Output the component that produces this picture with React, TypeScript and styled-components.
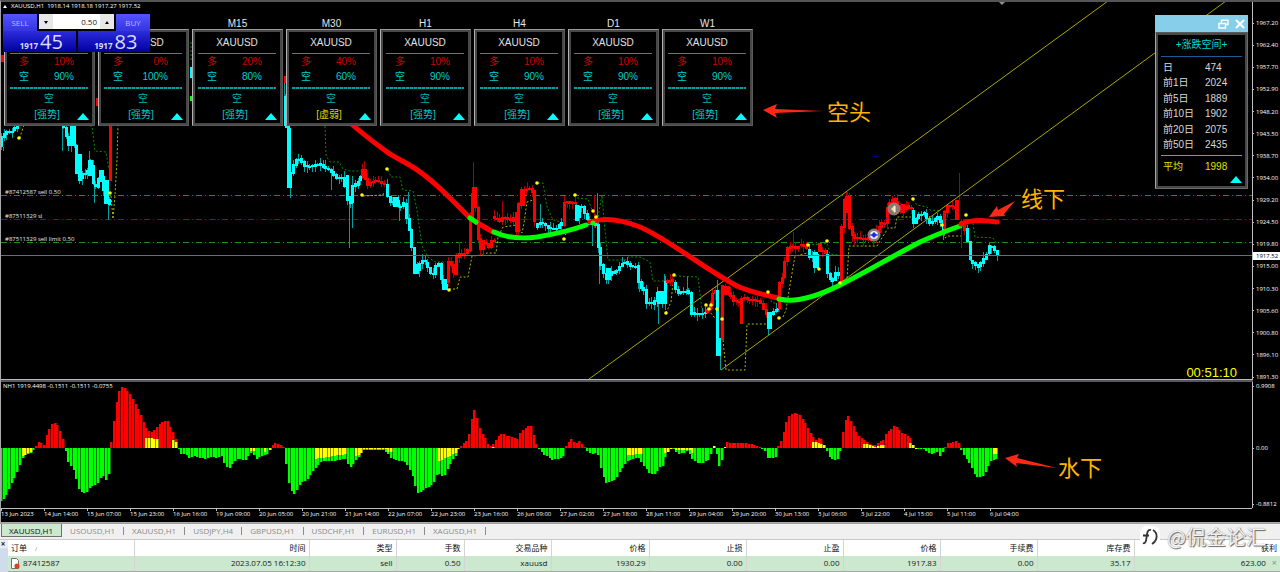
import React from 'react';
import styled, { createGlobalStyle } from 'styled-components';

const UI = '"Open Sans", "Noto Sans CJK SC", sans-serif';
const ARIAL = '"Liberation Sans", "Noto Sans CJK SC", sans-serif';
const CYAN = '#00ffff';
const RED = '#ff0000';
const LIME = '#00ff00';

const Global = createGlobalStyle`
  * { box-sizing: border-box; }
  body { margin: 0; background: #000; font-family: ${UI}; }
  button, input, select { font-family: inherit; padding: 0; margin: 0; border: 0; }
`;

/* ---------- price data ---------- */

type Run = { up: boolean; pts: number[] };

const RUNS: Run[] = [
  { up: false, pts: [0, 147, 3, 135, 8, 132, 14, 131, 18, 124] },
  { up: false, pts: [62, 118, 66, 132, 70, 146, 73, 120, 76, 152, 79, 181, 84, 173, 88, 175, 91, 162, 94, 184, 98, 188, 101, 170, 105, 190, 109, 204] },
  { up: false, pts: [284, 97, 287, 128, 289, 188, 292, 174, 296, 161, 301, 159, 306, 167, 312, 166, 320, 164, 326, 167, 332, 171, 338, 178, 345, 178, 347, 198, 351, 203, 354, 186, 358, 184, 361, 177] },
  { up: true, pts: [361, 170, 366, 178, 369, 185, 373, 181, 379, 181, 385, 184] },
  { up: false, pts: [386, 184, 388, 196, 393, 204, 397, 200, 400, 208, 405, 203, 407, 210, 408, 226, 412, 233, 414, 265, 418, 272, 422, 260, 427, 262, 431, 273, 434, 275, 438, 264, 441, 264, 442, 278, 447, 289] },
  { up: true, pts: [447, 282, 449, 262, 453, 265, 456, 275, 458, 254, 468, 253, 470, 240, 472, 203, 475, 188, 477, 212, 479, 238, 482, 249, 486, 241, 490, 247, 493, 240] },
  { up: true, pts: [493, 217, 501, 221, 505, 217, 512, 221, 515, 217, 517, 232, 519, 215, 521, 190, 533, 189, 536, 222] },
  { up: false, pts: [536, 228, 540, 222, 545, 224, 551, 229, 558, 228, 562, 222] },
  { up: true, pts: [563, 226, 565, 202, 574, 203] },
  { up: false, pts: [575, 206, 577, 220, 580, 207, 584, 206, 587, 218, 592, 226, 596, 222, 598, 232, 600, 257, 603, 270, 608, 280, 612, 271, 617, 273, 621, 266, 626, 262, 632, 266, 638, 266, 640, 286, 645, 290, 647, 303, 655, 304, 658, 292, 664, 303, 666, 282] },
  { up: true, pts: [666, 282, 674, 280] },
  { up: false, pts: [674, 283, 678, 293, 690, 291, 692, 315, 697, 313, 700, 315, 705, 312] },
  { up: true, pts: [706, 312, 711, 307, 715, 290] },
  { up: true, pts: [724, 288, 731, 293, 735, 302, 741, 301] },
  { up: true, pts: [743, 298, 750, 300, 760, 300, 765, 310, 767, 314] },
  { up: false, pts: [772, 314, 778, 308] },
  { up: true, pts: [778, 308, 780, 284, 785, 275, 787, 250, 790, 246, 797, 248, 802, 244, 807, 249] },
  { up: false, pts: [808, 250, 811, 258, 813, 253, 816, 268, 818, 254] },
  { up: true, pts: [821, 250, 826, 253] },
  { up: false, pts: [826, 255, 828, 272, 832, 281, 835, 280, 836, 272, 839, 275] },
  { up: true, pts: [840, 282, 842, 235, 845, 200, 849, 196, 851, 232, 855, 238, 874, 239, 879, 230, 882, 224, 886, 223, 888, 208, 893, 200, 897, 202, 902, 212, 906, 206, 911, 208] },
  { up: false, pts: [912, 212, 915, 224, 919, 215, 927, 213, 929, 223, 935, 222, 938, 216, 941, 219, 943, 229] },
  { up: true, pts: [943, 228, 946, 210, 950, 204, 955, 208] },
  { up: true, pts: [960, 222, 965, 230] },
  { up: false, pts: [966, 228, 968, 236, 971, 260, 975, 264, 980, 267, 983, 261, 987, 256, 990, 246, 993, 247, 998, 255] },
];

/* tall single bodies: x, y, width, height, colour */
const BLOCKS: [number, number, number, number, string][] = [
  [0, 55, 5, 7, RED], [96, 98, 3, 8, RED], [190, 67, 3, 11, CYAN], [190, 96, 3, 5, LIME],
  [284, 76, 3, 7, RED], [285, 97, 3, 31, CYAN], [287, 128, 4, 60, CYAN],
  [109, 125, 3, 56, RED], [78, 154, 4, 27, CYAN], [88, 160, 5, 16, CYAN], [99, 170, 5, 12, CYAN], [104, 180, 5, 24, CYAN],
  [362, 169, 5, 9, RED], [346, 175, 3, 24, CYAN], [349, 196, 4, 8, CYAN], [393, 197, 6, 10, CYAN],
  [413, 264, 6, 10, CYAN], [442, 279, 5, 11, CYAN], [454, 265, 4, 10, RED], [472, 187, 5, 16, RED],
  [480, 240, 5, 10, RED], [515, 212, 5, 20, RED], [520, 189, 5, 17, RED], [533, 190, 3, 32, RED],
  [575, 205, 4, 16, CYAN], [606, 268, 5, 12, CYAN], [657, 291, 8, 13, CYAN],
  [716, 290, 3, 48, CYAN], [716, 338, 5, 18, CYAN], [721, 285, 3, 55, RED], [724, 286, 6, 9, RED],
  [740, 298, 3, 26, RED], [767, 312, 5, 17, CYAN], [813, 252, 5, 16, CYAN], [818, 243, 4, 9, RED],
  [840, 235, 3, 47, RED], [845, 196, 5, 17, RED], [893, 198, 5, 6, RED], [901, 204, 4, 9, RED],
  [955, 200, 4, 20, RED], [912, 210, 3, 14, CYAN],
];

/* long shadows: x, top, bottom, up */
const WICKS: [number, number, number, boolean][] = [
  [3, 147, 151, false], [62, 125, 151, false], [89, 151, 162, false], [94, 184, 203, false], [108, 204, 220, false],
  [284, 83, 97, false], [290, 188, 198, false], [331, 170, 190, false], [349, 200, 248, false], [352, 176, 228, false],
  [364, 161, 170, true], [399, 205, 221, false], [408, 192, 228, false], [473, 162, 187, true], [502, 201, 216, true],
  [459, 242, 256, true], [527, 182, 192, true], [540, 204, 222, false], [592, 226, 246, false], [594, 195, 228, true],
  [597, 193, 227, false], [599, 257, 284, false], [639, 280, 292, false], [658, 300, 324, false], [664, 274, 290, false],
  [687, 276, 292, false], [717, 280, 290, false], [720, 356, 370, false], [793, 232, 246, true], [768, 329, 335, false],
  [959, 173, 200, true], [961, 226, 248, true], [943, 229, 240, false], [847, 192, 198, true], [897, 194, 200, true],
];

const noise = (n: number) => {
  const v = Math.sin(n * 12.9898) * 43758.5453;
  return v - Math.floor(v);
};

const sample = (pts: number[], x: number) => {
  for (let i = 0; i + 3 < pts.length; i += 2) {
    if (x <= pts[i + 2]) {
      const t = (x - pts[i]) / (pts[i + 2] - pts[i] || 1);
      return pts[i + 1] + t * (pts[i + 3] - pts[i + 1]);
    }
  }
  return pts[pts.length - 1];
};

const STEP = 2.69;

const Candles = () => (
  <g shapeRendering="crispEdges">
    {WICKS.map(([x, a, b, up], i) => (
      <rect key={i} x={x} y={a} width={1} height={b - a} fill={up ? '#a80000' : '#00a0a0'} />
    ))}
    {RUNS.map((run, r) => {
      const end = run.pts[run.pts.length - 2];
      const bars: React.ReactNode[] = [];
      for (let x = run.pts[0]; x < end; x += STEP) {
        const a = sample(run.pts, x);
        const b = sample(run.pts, Math.min(end, x + STEP));
        const top = Math.round(Math.min(a, b) - noise(x) * 1.5);
        const bottom = Math.max(top + 2, Math.round(Math.max(a, b) + noise(x + 7) * 1.5));
        const w0 = Math.round(top - noise(x + 3) * 6);
        const w1 = Math.round(bottom + noise(x + 5) * 6);
        bars.push(
          <g key={x}>
            <rect x={Math.round(x) + 1} y={w0} width={1} height={w1 - w0} fill={run.up ? '#b00000' : '#00a0a0'} />
            <rect x={Math.round(x)} y={top} width={3} height={bottom - top} fill={run.up ? RED : CYAN} />
          </g>,
        );
      }
      return <g key={r}>{bars}</g>;
    })}
    {BLOCKS.map(([x, y, w, h, c], i) => <rect key={i} x={x} y={y} width={w} height={h} fill={c} />)}
  </g>
);

const GREEN_STOPS = [
  '82,125 92,126 95,151 106,152 109,170', '325,126 326,156 330,162 339,162 343,169 350,171 361,171',
  '388,170 391,177 400,177 403,190 413,191 417,210 422,246 428,257 435,262 445,262',
  '538,183 543,183 547,207 553,220 562,222', '577,198 588,199 592,210 598,217 602,195 604,220 608,260 625,260 628,257 640,257 650,262 653,281 665,281',
  '675,276 698,277 702,310 706,312', '768,293 772,303 777,303', '808,245 823,244 827,243 830,254 838,255',
  '913,200 917,205 927,207 930,210 940,211', '973,223 975,237 993,238 997,244', '191,42 191,62',
];
const YELLOW_STOPS = [
  '24,125 20,137', '38,125 47,125', '111,196 113,219 115,195 117,160 118,125', '363,196 383,195 384,191',
  '449,289 457,289 460,277 468,277 472,256 483,255 487,253 496,253 498,237 503,227 517,225 522,233 524,223 527,202 533,200',
  '565,235 569,230', '666,313 671,302 673,283', '708,310 715,318', '723,340 726,370 745,370 747,324 766,324',
  '783,317 786,310 790,285 795,256 807,253', '841,283 847,279 849,246 877,246 885,233 888,228 895,228 897,217 911,217',
  '943,230 945,238 948,236 963,236',
];
const DOTS = [
  [19, 138], [110, 193], [387, 169], [362, 195], [449, 290], [537, 183], [575, 195], [593, 211], [596, 217], [564, 239],
  [674, 275], [666, 313], [706, 305], [709, 309], [711, 305], [717, 309], [722, 319], [768, 292], [779, 318], [808, 245],
  [827, 241], [819, 269], [840, 283], [913, 199], [942, 225], [966, 215],
];

/* ---------- histogram data ---------- */

const HIST = [
  0, -54, 5, -50, 10, -39, 15, -29, 20, -17, 23, -9, 26, -6, 32, -5, 34, 0, 36, 2, 39, 7, 43, 3, 45, 3, 47, 14, 50, 20, 53, 25, 57, 24, 60, 17, 63, 9,
  64, 0, 66, -4, 69, -17, 73, -20, 76, -30, 79, -41, 83, -45, 87, -44, 91, -38, 97, -37, 101, -29, 104, -28, 106, -32, 109, -25, 110, 0,
  112, 10, 114, 27, 116, 43, 119, 57, 122, 61, 125, 60, 130, 54, 135, 45, 140, 36, 143, 27, 147, 18, 151, 15, 156, 20, 160, 24, 163, 27, 168, 27,
  171, 20, 175, 12, 178, 1, 180, -6, 186, -6, 189, -10, 195, -8, 205, -11, 212, -9, 217, -10, 221, -7, 225, -17, 229, -21, 234, -14, 238, -11,
  246, -12, 250, -5, 253, -6, 256, -11, 262, -8, 267, -7, 270, -2, 272, 3, 276, 5, 280, 4, 284, 1, 285, -7, 288, -32, 291, -42, 294, -46, 298, -40,
  301, -35, 306, -33, 314, -22, 322, -13, 330, -13, 340, -12, 345, -10, 350, -20, 354, -15, 358, -10, 362, -4, 364, -2, 384, -2, 388, -6, 392, -11,
  400, -13, 405, -14, 409, -20, 413, -29, 417, -45, 420, -44, 424, -41, 430, -38, 434, -34, 437, -26, 440, -26, 444, -29, 448, -20, 452, -12,
  456, -8, 458, -1, 460, 1, 464, 5, 468, 8, 471, 24, 473, 37, 475, 38, 478, 27, 481, 16, 485, 10, 489, 2, 492, 2, 495, 6, 499, 13, 503, 15, 506, 12,
  513, 11, 517, 8, 521, 17, 525, 20, 528, 22, 532, 22, 534, 11, 537, 2, 539, -1, 543, -6, 548, -9, 552, -12, 557, -11, 563, -10, 564, -1, 567, 4,
  572, 10, 575, 4, 580, 7, 584, 2, 586, -2, 592, -7, 594, -4, 598, -6, 602, -25, 606, -35, 609, -34, 615, -32, 621, -22, 624, -17, 628, -13,
  633, -11, 638, -9, 642, -15, 647, -22, 650, -26, 656, -26, 659, -19, 663, -18, 666, -7, 670, -2, 672, 0, 675, -3, 678, -6, 684, -5, 688, -2,
  691, -10, 696, -14, 702, -16, 706, -13, 710, -12, 712, -2, 714, 2, 716, -3, 718, -15, 720, -20, 723, -7, 725, 2, 727, 6, 732, 5, 745, 5, 752, 4,
  760, 1, 762, -1, 765, -3, 768, -11, 772, -10, 777, -8, 778, 1, 782, 9, 786, 25, 790, 34, 794, 35, 799, 34, 803, 29, 807, 22, 811, 14, 816, 8,
  820, 11, 823, 6, 826, -1, 830, -10, 834, -12, 839, -11, 841, 2, 843, 16, 846, 30, 848, 33, 852, 25, 856, 17, 860, 11, 865, 8, 870, 4, 875, 3,
  880, 7, 884, 8, 886, 14, 890, 18, 894, 22, 897, 21, 901, 16, 905, 14, 908, 12, 911, 9, 913, 3, 915, -1, 924, -1, 927, -4, 932, -6, 937, -4,
  940, -8, 943, -3, 945, 0, 947, 5, 955, 6, 957, 8, 960, 3, 962, -4, 967, -11, 971, -17, 974, -25, 978, -30, 982, -29, 985, -25, 988, -18,
  991, -13, 995, -11, 998, -11,
];
/* from, to, size at start, size at end */
const SIGNAL = [
  [19, 32, 9, 3], [144, 158, 10, 9], [171, 177, 9, 4], [250, 255, 3, 3], [262, 265, 4, 4], [268, 270, 3, 3], [313, 346, 11, 6], [354, 361, 9, 5],
  [361, 386, 1, 1], [386, 391, 4, 4], [437, 458, 14, 3], [490, 493, 1, 1], [625, 641, 7, 6], [663, 670, 6, 2], [673, 689, 2, 2], [689, 692, 5, 5],
  [711, 714, 3, 3], [722, 724, 4, 4], [810, 825, 7, 3], [861, 875, 5, 1], [875, 885, 2, 4], [907, 915, 6, 1], [992, 999, 6, 6],
];
const ZERO = 448;

const Histogram = () => {
  const bars: React.ReactNode[] = [];
  for (let i = 0; i < 371; i++) {
    const x = i * STEP;
    const v = Math.round(sample(HIST, x + 1));
    const px = Math.round(x);
    const bar = (h: number, bright: string, dark: string, k: string) => {
      const size = Math.max(1, Math.abs(h));
      const y = h >= 0 ? ZERO - size : ZERO;
      return (
        <g key={k + i}>
          <rect x={px} y={y} width={3} height={size} fill={dark} />
          <rect x={px} y={y} width={2} height={size} fill={bright} />
        </g>
      );
    };
    bars.push(v >= 0 ? bar(v, RED, '#780000', 'v') : bar(v, LIME, '#007800', 'v'));
    const s = SIGNAL.find(([a, b]) => x >= a && x < b);
    if (s) {
      const h = Math.min(Math.abs(v) || 1, Math.round(s[2] + ((s[3] - s[2]) * (x - s[0])) / (s[1] - s[0])));
      bars.push(bar(v >= 0 ? h : -h, '#ffff00', '#8c8c00', 's'));
    }
  }
  return <g shapeRendering="crispEdges">{bars}</g>;
};

/* ---------- chart window ---------- */

const ChartWindow = styled.section`
  display: flex;
  border-top: 2px solid #555;
  border-left: 1px solid #a8a8a8;
  border-bottom: 1px solid #a8a8a8;
  background: #000;
  color: #fff;
`;
const Panes = styled.div`flex: 1; min-width: 0; display: flex; flex-direction: column;`;
const Pane = styled.div<{ $h: number }>`
  position: relative;
  height: ${(p) => p.$h}px;
  border-right: 1px solid #c0c0c0;
  overflow: hidden;
`;
const Drawing = styled.svg`display: block; width: 100%; height: 100%;`;
const Splitter = styled.div`height: 3px; background: #57575c; border-top: 1px solid #b8b8b8;`;
const Caption = styled.div`
  position: absolute;
  top: 0;
  left: 2px;
  display: flex;
  align-items: center;
  gap: 4px;
  font-size: 6px;
  line-height: 9px;
  white-space: pre;
  svg { fill: #fff; }
`;
const TimeAxis = styled.div`
  display: flex;
  height: 14px;
  border-top: 1px solid #c0c0c0;
  font-size: 6px;
  line-height: 11px;
  overflow: hidden;
  margin-right: 1px;
`;
const Tick = styled.span`flex: 0 0 43px; white-space: nowrap; position: relative;
  &::before { content: ''; position: absolute; top: 0; left: 0; width: 1px; height: 2px; background: #c0c0c0; }
`;
const Axis = styled.div`
  position: relative;
  flex: 0 0 27px;
  font-size: 6px;
  line-height: 8px;
  overflow: hidden;
`;
const Scale = styled.ul<{ $h: number; $top: number }>`
  list-style: none;
  margin: ${(p) => p.$top}px 0 0;
  padding: 0;
  height: ${(p) => p.$h}px;
  display: flex;
  flex-direction: column;
  justify-content: space-between;
  li { display: flex; align-items: center; gap: 2px; white-space: nowrap; }
  li::before { content: ''; width: 1px; height: 1px; background: #c0c0c0; }
`;
const SubScale = styled(Scale)`
  li:nth-child(2) { padding-top: 6px; }
`;
const LastPrice = styled.div`
  position: absolute;
  top: 250px;
  left: 0;
  right: 0;
  height: 8px;
  background: #fff;
  color: #000;
  padding-left: 3px;
`;
const Countdown = styled.time`
  position: absolute;
  right: 15px;
  bottom: -1px;
  font: 13px/14px ${ARIAL};
  color: #ffff00;
`;
const Note = styled.span<{ $x: number; $y: number }>`
  position: absolute;
  left: ${(p) => p.$x}px;
  top: ${(p) => p.$y}px;
  font: 22px/24px "Noto Sans CJK SC", sans-serif;
  color: #ffb400;
  white-space: nowrap;
`;

/* ---------- one-click trading ---------- */

const TradeBox = styled.form`
  position: absolute;
  left: 2px;
  top: 12px;
  width: 147px;
  display: grid;
  grid-template-columns: 34px minmax(0, 1fr) 34px;
  background: #000;
`;
const SideButton = styled.button`
  height: 17px;
  font-size: 8px;
  line-height: 14px;
  color: #b8b8ff;
  background: linear-gradient(#5454ff, #3434e0);
`;
const Lots = styled.div`
  display: flex;
  margin: 0 2px 2px;
  background: #fff;
  button { flex: 0 0 14px; background: #e8e8e8; line-height: 0; }
  input { flex: 1; width: 0; min-width: 0; text-align: right; font-size: 8px; padding-right: 3px; color: #222; background: #fff; }
`;
const Quotes = styled.div`grid-column: 1 / -1; display: grid; grid-template-columns: 1fr 1fr; gap: 2px;`;
const Quote = styled.button`
  height: 21px;
  display: flex;
  align-items: flex-end;
  justify-content: center;
  gap: 2px;
  padding-left: 4px;
  color: #dcdcff;
  background: linear-gradient(#2c2cdc, #0000a0);
  small { font-size: 8px; font-weight: 700; line-height: 12px; }
  b { font-size: 20px; font-weight: 400; line-height: 21px; }
`;

/* ---------- timeframe cards ---------- */

const Cards = styled.div`position: absolute; left: 3px; top: 16px; display: flex; gap: 3px; font-family: ${ARIAL}; font-size: 10px;`;
const CardCol = styled.div`width: 91px; text-align: center;`;
const CardTitle = styled.div`height: 11px; line-height: 11px; color: #e8e8e8;`;
const Card = styled.div`
  height: 97px;
  border: 1px solid;
  border-color: #9a9a9a #5a5a5a #5a5a5a #b4b4b4;
  box-shadow: inset 0 0 0 2px #484848;
  background: #000;
  padding: 6px 6px 0 5px;
  position: relative;
`;
const Symbol = styled.div`line-height: 14px; color: #e0e0e0; height: 18px; border-bottom: 1px solid #707070;`;
const Ratio = styled.div<{ $c: string }>`
  display: flex;
  justify-content: space-between;
  padding: 0 14px 0 9px;
  line-height: 15px;
  color: ${(p) => p.$c};
`;
const Verdict = styled.div`
  margin-top: 3px;
  background: repeating-linear-gradient(90deg, #00a0a0 0 3px, #004848 3px 4px) top / 100% 2px no-repeat;
  color: #00b4b4;
  padding-top: 4px;
  line-height: 15px;
`;
const Strength = styled.div<{ $weak: boolean }>`line-height: 17px; padding-right: 4px; color: ${(p) => (p.$weak ? '#d8d800' : '#00c8c8')};`;
const Fold = styled.svg`position: absolute; right: 5px; bottom: 5px; width: 12px; height: 7px; fill: ${CYAN};`;

/* ---------- range panel ---------- */

const RangePanel = styled.aside`position: absolute; right: 4px; top: 13px; width: 93px; font: 10px/15px ${ARIAL}; color: #d8d8d8;`;
const RangeHead = styled.header`
  height: 17px;
  background: #87ceeb;
  display: flex;
  justify-content: flex-end;
  align-items: center;
  gap: 6px;
  padding-right: 3px;
  button { background: none; height: 12px; line-height: 0; }
`;
const RangeBody = styled.div`
  position: relative;
  height: 157px;
  background: #000;
  border: 1px solid;
  border-color: #5a5a5a #6a6a6a #6a6a6a #a8a8a8;
  box-shadow: inset 0 0 0 2px #484848;
  padding: 4px 5px 0;
`;
const RangeTitle = styled.div`text-align: center; height: 20px; color: #00d8d8; border-bottom: 1px solid #1e5a96; margin-bottom: 2px;`;
const RangeTable = styled.table`
  width: 100%;
  border-collapse: collapse;
  th, td { padding: 0; font-weight: 400; text-align: left; height: 15px; line-height: 15px; }
  th { width: 44px; padding-left: 2px; }
  tfoot th, tfoot td { color: #e0e000; border-top: 1px solid #a0a000; height: 22px; }
  tbody tr:nth-child(odd) > * { height: 16px; }
  tbody tr:last-child > * { height: 18px; line-height: 15px; vertical-align: top; }
`;

/* ---------- bottom area ---------- */

const Tabs = styled.nav`
  display: flex;
  height: 17px;
  background: #f0f0f0;
  border-top: 1px solid #a0a0a0;
  border-bottom: 1px solid #c8c8c8;
  font-size: 8px;
  line-height: 13px;
`;
const Tab = styled.a<{ $on?: boolean }>`
  height: 13px;
  color: ${(p) => (p.$on ? '#101010' : '#8c8c8c')};
  text-decoration: none;
  padding: 0 9px 0 8px;
  background: ${(p) => (p.$on ? '#cce8cf' : 'none')};
  ${(p) => (p.$on ? 'border: 1px solid #707070; border-top: 0; margin-left: 1px; padding: 0 8px 0 7px;' : 'background: linear-gradient(#8c8c8c, #8c8c8c) right 3px / 1px 8px no-repeat;')}
`;
const Terminal = styled.section`display: flex; background: #fff; position: relative;`;
const Grip = styled.div`
  flex: 0 0 8px;
  background: linear-gradient(#f0f0f0 7px, #cfdcec 9px);
  button { display: block; width: 6px; height: 7px; background: none; font-size: 8px; line-height: 6px; font-weight: 700; color: #222; }
`;
const Orders = styled.table`
  flex: 1;
  table-layout: fixed;
  border-collapse: collapse;
  font-size: 8px;
  color: #202020;
  th, td { padding: 0 3px; text-align: right; font-weight: 400; white-space: nowrap; border-right: 1px solid #d4d4d4; line-height: 14px; }
  th { height: 16px; color: #101010; }
  td { height: 15px; background: #cce8cf; border-bottom: 1px solid #a8a8a8; }
  th:first-child, td:first-child { text-align: left; }
  th:last-child, td:last-child { border-right: 0; }
  td:last-child button { background: none; color: #909090; font-size: 9px; line-height: 10px; margin-left: 6px; }
`;
const OrderId = styled.span`display: flex; align-items: center; gap: 3px;`;
const Sort = styled.span`color: #808080; font-size: 6px; margin-left: 8px;`;
const Watermark = styled.div`
  position: absolute;
  right: 14px;
  top: -16px;
  display: flex;
  align-items: center;
  gap: 7px;
  font: 20px/26px "Noto Sans CJK SC", sans-serif;
  color: #f4f4f4;
  text-shadow: 1px 1px 1px #666, 0 0 1px #888;
`;

const PRICES = ['1967.20', '1962.40', '1957.70', '1952.90', '1948.20', '1943.50', '1938.70', '1934.00', '1929.20', '1924.50', '1919.80', '1915.00', '1910.30', '1905.60', '1900.80', '1896.10', '1891.30'];
const TIMES = ['13 Jun 2023', '14 Jun 14:00', '15 Jun 07:00', '15 Jun 23:00', '16 Jun 16:00', '19 Jun 09:00', '20 Jun 05:00', '20 Jun 21:00', '21 Jun 14:00', '22 Jun 07:00', '22 Jun 23:00', '23 Jun 16:00', '26 Jun 09:00', '27 Jun 02:00', '27 Jun 18:00', '28 Jun 11:00', '29 Jun 04:00', '29 Jun 20:00', '30 Jun 13:00', '3 Jul 06:00', '3 Jul 22:00', '4 Jul 15:00', '5 Jul 11:00', '6 Jul 04:00'];
/* the first two frames sit behind the trading box, so their captions are left out */
const FRAMES: { name: string; symbol: string; bull: number }[] = [
  { name: '', symbol: '', bull: 10 },
  { name: '', symbol: 'XAUUSD', bull: 0 },
  { name: 'M15', symbol: 'XAUUSD', bull: 20 },
  { name: 'M30', symbol: 'XAUUSD', bull: 40 },
  { name: 'H1', symbol: 'XAUUSD', bull: 10 },
  { name: 'H4', symbol: 'XAUUSD', bull: 10 },
  { name: 'D1', symbol: 'XAUUSD', bull: 10 },
  { name: 'W1', symbol: 'XAUUSD', bull: 10 },
];
const RANGES = [['日', '474'], ['前1日', '2024'], ['前5日', '1889'], ['前10日', '1902'], ['前20日', '2075'], ['前50日', '2435']];
const TABS = ['XAUUSD,H1', 'USOUSD,H1', 'XAUUSD,H1', 'USDJPY,H4', 'GBPUSD,H1', 'USDCHF,H1', 'EURUSD,H1', 'XAGUSD,H1'];
const COLUMNS: [string, string, number][] = [
  ['订单', '87412587', 126], ['时间', '2023.07.05 16:12:30', 175], ['类型', 'sell', 87], ['手数', '0.50', 68], ['交易品种', 'xauusd', 87],
  ['价格', '1930.29', 98], ['止损', '0.00', 97], ['止盈', '0.00', 97], ['价格', '1917.83', 97], ['手续费', '0.00', 97], ['库存费', '35.17', 97], ['获利', '623.00', 146],
];

const Level = ({ y, color, label }: { y: number; color: string; label: string }) => (
  <g>
    <line x1="0" x2="100%" y1={y} y2={y} stroke={color} strokeDasharray="6 3 1 3" shapeRendering="crispEdges" />
    <text x="4" y={y - 2} fontSize="6" fill="#e8e8e8">{label}</text>
  </g>
);

const PriceDrawing = () => (
  <Drawing aria-label="XAUUSD H1">
    <g transform="translate(0 -2)">
      <Level y={195.5} color="#228b22" label="#87412587 sell 0.50" />
      <Level y={219.5} color="#a00000" label="#87511329 sl" />
      <Level y={242.5} color="#228b22" label="#87511329 sell limit 0.50" />
      <path d="M997 1h8l-4 4z" fill="#909090" />
      <g transform="translate(-1 0)">
        <g fill="none" strokeDasharray="2 2">
          {GREEN_STOPS.map((p) => <polyline key={p} points={p} stroke="#009000" />)}
          {YELLOW_STOPS.map((p) => <polyline key={p} points={p} stroke="#b4b400" />)}
        </g>
        <Candles />
        <g stroke="#a8a800" strokeWidth="1">
          <path d="M589 379L1108 1" />
          <path d="M721 370L1226 1" />
        </g>
        <line x1="0" x2="110%" y1="255.5" y2="255.5" stroke="#607080" shapeRendering="crispEdges" />
        <g fill="none" strokeWidth="5" strokeLinecap="round" strokeLinejoin="round">
          <path stroke={RED} d="M348 121C358 130 372 141 387 152C394 157 403 161 411 166C430 177 450 198 470 218M476 222L493 232M590 222C605 217 622 220 640 227C668 239 700 266 737 286C750 292 765 295 778 298" />
          <path stroke={LIME} d="M470 218L476 222M494 232C506 238 520 239 537 237C555 234 575 229 586 225M779 299C796 303 820 295 840 285C866 272 893 256 920 242C935 235 946 231 960 226" />
          <path stroke={RED} d="M961 224C972 219 985 220 997 222" />
        </g>
        <circle cx="593" cy="223" r="2.5" fill={LIME} />
        <g fill="#ffff00">{DOTS.map(([x, y]) => <circle key={`${x}-${y}`} cx={x} cy={y} r="1.8" />)}</g>
        <path d="M874 235L894 209" stroke="#2020c0" strokeDasharray="2 2" />
        <path d="M873 156.5h5" stroke="#000090" strokeWidth="1" />
        <circle cx="874" cy="235" r="6.5" fill="#8c7f7a" opacity=".95" />
        <circle cx="874" cy="235" r="4" fill="#f4e8e8" />
        <path d="M874 232l3 3-3 3-3-3z" fill="#1030ff" />
        <path d="M870 235h8" stroke="#1030ff" />
        <circle cx="894" cy="209" r="6.5" fill="#8c7f7a" opacity=".95" />
        <path d="M891 209l4-4v8z" fill="#ffd9a0" />
        <path d="M895 206v6" stroke="#fff" />
        <g fill="#ff2814">
          <path d="M763 110l14-6-2 5 48 2-48 2 2 5z" />
          <path d="M989 217l8-11 1 4 17-9-11 13 1 2z" />
        </g>
      </g>
    </g>
  </Drawing>
);

export default function App() {
  return (
    <>
      <Global />
      <main>
        <ChartWindow>
          <Panes>
            <Pane $h={377}>
              <PriceDrawing />
              <Caption>
                <svg width="4" height="3"><path d="M2 0l2 3H0z" /></svg>
                {'XAUUSD,H1  1918.14 1918.18 1917.27 1917.52'}
              </Caption>
              <Cards>
                {FRAMES.map(({ name, symbol, bull }, i) => (
                  <CardCol key={i}>
                    <CardTitle>{name}</CardTitle>
                    <Card>
                      <Symbol>{symbol}</Symbol>
                      <Ratio $c="#d00000"><span>多</span><span>{bull}%</span></Ratio>
                      <Ratio $c="#00d0d0"><span>空</span><span>{100 - bull}%</span></Ratio>
                      <Verdict>空</Verdict>
                      <Strength $weak={name === 'M30'}>{name === 'M30' ? '[虚弱]' : '[强势]'}</Strength>
                      <Fold viewBox="0 0 12 7"><path d="M6 0l6 7H0z" /></Fold>
                    </Card>
                  </CardCol>
                ))}
              </Cards>
              <TradeBox>
                <SideButton type="button">SELL</SideButton>
                <Lots>
                  <button type="button" aria-label="decrease"><svg width="4" height="3"><path d="M0 0h4L2 3z" /></svg></button>
                  <input aria-label="Lots" defaultValue="0.50" />
                  <button type="button" aria-label="increase"><svg width="4" height="3"><path d="M2 0l2 3H0z" /></svg></button>
                </Lots>
                <SideButton type="button">BUY</SideButton>
                <Quotes>
                  <Quote type="button"><small>1917</small><b>45</b></Quote>
                  <Quote type="button"><small>1917</small><b>83</b></Quote>
                </Quotes>
              </TradeBox>
              <RangePanel>
                <RangeHead>
                  <button type="button" aria-label="restore">
                    <svg width="11" height="10" fill="none" stroke="#fff" strokeWidth="1.4"><path d="M3.5 4V1.2H10V5.5H8M1 4.5H7.5V9H1z" /></svg>
                  </button>
                  <button type="button" aria-label="close">
                    <svg width="10" height="10" stroke="#fff" strokeWidth="2"><path d="M1 1L9 9M9 1L1 9" /></svg>
                  </button>
                </RangeHead>
                <RangeBody>
                  <RangeTitle>+涨跌空间+</RangeTitle>
                  <RangeTable>
                    <tbody>
                      {RANGES.map(([k, v]) => <tr key={k}><th scope="row">{k}</th><td>{v}</td></tr>)}
                    </tbody>
                    <tfoot><tr><th scope="row">平均</th><td>1998</td></tr></tfoot>
                  </RangeTable>
                  <Fold viewBox="0 0 12 7"><path d="M6 0l6 7H0z" /></Fold>
                </RangeBody>
              </RangePanel>
              <Note $x={826} $y={96}>空头</Note>
              <Note $x={1020} $y={183}>线下</Note>
              <Countdown>00:51:10</Countdown>
            </Pane>
            <Splitter />
            <Pane $h={126}>
              <Drawing aria-label="NH1">
                <g transform="translate(-1 -382)">
                  <Histogram />
                  <path d="M1005 458l14-4-2 4 40 10-41-5 1 4z" fill="#ff2814" />
                </g>
              </Drawing>
              <Caption>NH1 1919.4498 -0.1511 -0.1511 -0.0755</Caption>
              <Note $x={1057} $y={72}>水下</Note>
            </Pane>
            <TimeAxis>{TIMES.map((t) => <Tick key={t}>{t}</Tick>)}</TimeAxis>
          </Panes>
          <Axis>
            <Scale $top={17} $h={362}>{PRICES.map((p) => <li key={p}>{p}</li>)}</Scale>
            <SubScale $top={1} $h={126}><li>0.9908</li><li>0.00</li><li>-0.8812</li></SubScale>
            <LastPrice>1917.52</LastPrice>
          </Axis>
        </ChartWindow>
        <Tabs>
          {TABS.map((t, i) => <Tab key={i} href="#" $on={i === 0}>{t}</Tab>)}
        </Tabs>
        <Terminal>
          <Grip><button type="button" aria-label="close">×</button></Grip>
          <Orders>
            <colgroup>{COLUMNS.map((c, i) => <col key={i} width={c[2]} />)}</colgroup>
            <thead>
              <tr>{COLUMNS.map((c, i) => <th key={i} scope="col">{c[0]}{i === 0 && <Sort>/</Sort>}</th>)}</tr>
            </thead>
            <tbody>
              <tr>
                {COLUMNS.map((c, i) => (
                  <td key={i}>
                    {i === 0 ? (
                      <OrderId>
                        <svg width="9" height="11">
                          <path d="M.5.5h5l2 2v8h-7z" fill="#fff" stroke="#707070" />
                          <circle cx="6" cy="8" r="2.6" fill="#e04020" />
                        </svg>
                        {c[1]}
                      </OrderId>
                    ) : c[1]}
                    {i === 11 && <button type="button" aria-label="close order">×</button>}
                  </td>
                ))}
              </tr>
            </tbody>
          </Orders>
          <Watermark>
            <svg width="20" height="22" fill="none">
              <rect width="20" height="21" rx="7" fill="#fff" />
              <path d="M11 4C7 3 7 8 6.500 12S5 18 3 17M3 9.500h6" stroke="#333" strokeWidth="1.800" />
              <path d="M13 4c5 3 5 10-1 14" stroke="#333" strokeWidth="1.800" />
            </svg>
            @侃金论汇
          </Watermark>
        </Terminal>
      </main>
    </>
  );
}
